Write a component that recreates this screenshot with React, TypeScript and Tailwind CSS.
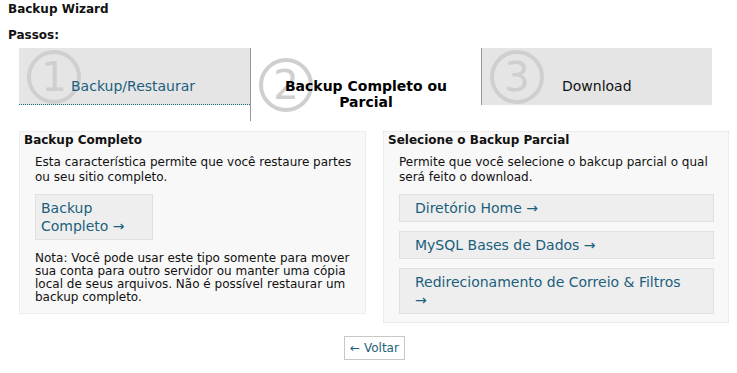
import React from "react";

const teal = "text-[#1b5f7c]";

function Circle({ n }: { n: string }) {
  return (
    <div className="absolute flex h-[54px] w-[54px] items-center justify-center rounded-full border-[4px] border-[#cfcfcf] text-[40px] font-normal leading-none text-[#cfcfcf]">
      {n}
    </div>
  );
}

function Step({ n, label, active }: { n: string; label: string; active?: boolean }) {
  if (active) {
    return (
      <div className="relative h-[73px] w-[231px] border-l border-[#999] bg-white">
        <div className="absolute left-[8px] top-[10px]">
          <Circle n={n} />
        </div>
        <div className="relative pt-[30px] text-center text-[14px] font-bold leading-[16px] text-black">
          Backup Completo ou
          <br />
          Parcial
        </div>
      </div>
    );
  }
  return (
    <div
      className={
        "relative h-[57px] w-[231px] overflow-hidden bg-[#e5e5e5] " +
        (n === "1" ? "border-b border-dotted border-[#1b6a7c]" : "border-l border-[#999]")
      }
    >
      <div className="absolute left-[8px] top-[2px]">
        <Circle n={n} />
      </div>
      <div
        className={
          "relative pt-[30px] text-[14px] leading-[16px] " +
          (n === "1" ? "pl-[52px] " + teal : "pl-[80px] text-[#111]")
        }
      >
        {label}
      </div>
    </div>
  );
}

function LinkBox({ children, className = "" }: { children: React.ReactNode; className?: string }) {
  return (
    <div
      className={
        "border border-[#e0e0e0] bg-[#eeeeee] text-[14px] leading-[18px] " + teal + " " + className
      }
    >
      {children}
    </div>
  );
}

export default function App() {
  return (
    <div className="min-h-screen bg-white px-2 pt-[2px] font-['DejaVu_Sans',sans-serif] text-[12px] text-[#111]">
      <div className="text-[12px] font-bold leading-[14px]">Backup Wizard</div>
      <div className="mt-[12px] text-[12px] font-bold leading-[14px]">Passos:</div>

      <div className="ml-[11px] mt-[6px] flex items-start">
        <Step n="1" label="Backup/Restaurar" />
        <Step n="2" label="" active />
        <Step n="3" label="Download" />
      </div>

      <div className="ml-[11px] mt-[10px] flex items-start">
        <div className="w-[347px] border border-dotted border-[#e2e2e2] bg-[#f8f8f8] pb-[9px] pl-[4px] pr-[8px] pt-[1px]">
          <div className="font-bold leading-[14px]">Backup Completo</div>
          <div className="mt-[8px] pl-[11px] leading-[15px]">
            Esta característica permite que você restaure partes ou seu sitio completo.
          </div>
          <div className="ml-[11px] mt-[9px] w-[118px]">
            <LinkBox className="px-[5px] py-[4px]">
              Backup
              <br />
              Completo →
            </LinkBox>
          </div>
          <div className="mt-[12px] pl-[11px] leading-[13px]">
            Nota: Você pode usar este tipo somente para mover sua conta para outro servidor ou
            manter uma cópia local de seus arquivos. Não é possível restaurar um backup completo.
          </div>
        </div>

        <div className="ml-[17px] w-[346px] border border-dotted border-[#e2e2e2] bg-[#f8f8f8] pb-[8px] pl-[4px] pr-[14px] pt-[1px]">
          <div className="font-bold leading-[14px]">Selecione o Backup Parcial</div>
          <div className="mt-[8px] pl-[11px] leading-[15px]">
            Permite que você selecione o bakcup parcial o qual será feito o download.
          </div>
          <div className="ml-[11px] mt-[9px] flex flex-col gap-[9px]">
            <LinkBox className="px-[15px] py-[4px]">Diretório Home →</LinkBox>
            <LinkBox className="px-[15px] py-[4px]">MySQL Bases de Dados →</LinkBox>
            <LinkBox className="px-[15px] py-[4px]">
              Redirecionamento de Correio &amp; Filtros
              <br />→
            </LinkBox>
          </div>
        </div>
      </div>

      <div className="mt-[13px] flex justify-center pl-[12px]">
        <div className={"border border-[#c8c8c8] px-[5px] py-[4px] text-[12px] leading-[14px] " + teal}>
          ← Voltar
        </div>
      </div>
    </div>
  );
}
